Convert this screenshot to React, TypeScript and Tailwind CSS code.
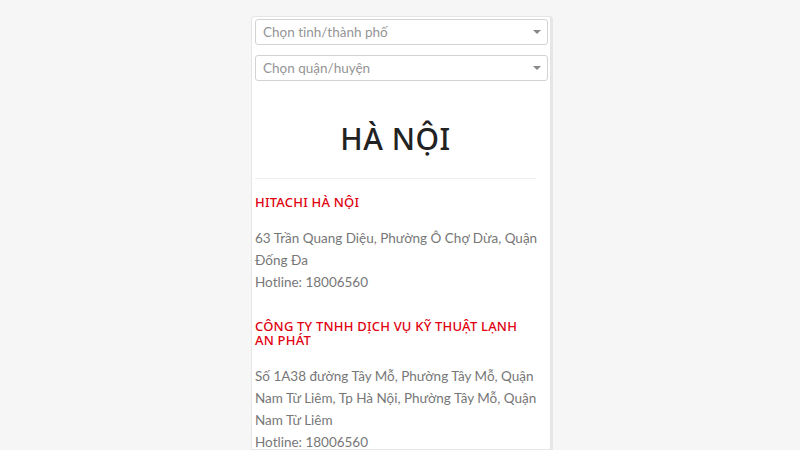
import React from "react";

function Select({ label }: { label: string }) {
  return (
    <div className="flex h-[26px] items-center justify-between rounded-[3px] border border-[#d3d3d3] bg-white pl-[7px] pr-[5px]">
      <span className="text-[13.5px] text-[#959595]" style={{ fontFamily: "Lato, sans-serif" }}>{label}</span>
      <svg width="10" height="6" viewBox="0 0 10 6"><path d="M1 1 L9 1 L5 5 Z" fill="#888" /></svg>
    </div>
  );
}

export default function App() {
  return (
    <div className="flex min-h-[450px] justify-center bg-[#f6f6f6] pl-[4px]" style={{ fontFamily: "Lato, sans-serif" }}>
      <div className="mt-[16px] h-[434px] w-[302px] overflow-hidden rounded-t-[4px] border border-r-[3px] border-[#e6e6e6] bg-white pl-[3px] pr-[2px] pt-[2px]">
        <div className="flex flex-col gap-[10px]">
          <Select label="Chọn tỉnh/thành phố" />
          <Select label="Chọn quận/huyện" />
        </div>
        <div className="pr-[12px]">
          <h1 className="mt-[38px] pb-[19px] text-center text-[30px] font-medium leading-[40px] tracking-[0.5px] text-[#222] border-b border-[#eeeeee]" style={{ fontFamily: '"Noto Sans", sans-serif' }}>
            HÀ NỘI
          </h1>
        </div>
        <div className="mt-[16px]">
          <h2 className="text-[13px] font-medium leading-[14px] tracking-[0.2px] text-[#e0000f]" style={{ fontFamily: '"Noto Sans", sans-serif' }}>HITACHI HÀ NỘI</h2>
          <p className="mt-[18px] text-[13.5px] leading-[22px] text-[#777]">
            63 Trần Quang Diệu, Phường Ô Chợ Dừa, Quận Đống Đa
            <br />
            Hotline: 18006560
          </p>
        </div>
        <div className="mt-[26px]">
          <h2 className="pr-[12px] text-[13px] font-medium leading-[14px] tracking-[0.2px] text-[#e0000f]" style={{ fontFamily: '"Noto Sans", sans-serif' }}>CÔNG TY TNHH DỊCH VỤ KỸ THUẬT LẠNH AN PHÁT</h2>
          <p className="mt-[18px] pr-[10px] text-[13.5px] leading-[22px] text-[#777]">
            Số 1A38 đường Tây Mỗ, Phường Tây Mỗ, Quận Nam Từ Liêm, Tp Hà Nội, Phường Tây Mỗ, Quận Nam Từ Liêm
            <br />
            Hotline: 18006560
          </p>
        </div>
      </div>
    </div>
  );
}
